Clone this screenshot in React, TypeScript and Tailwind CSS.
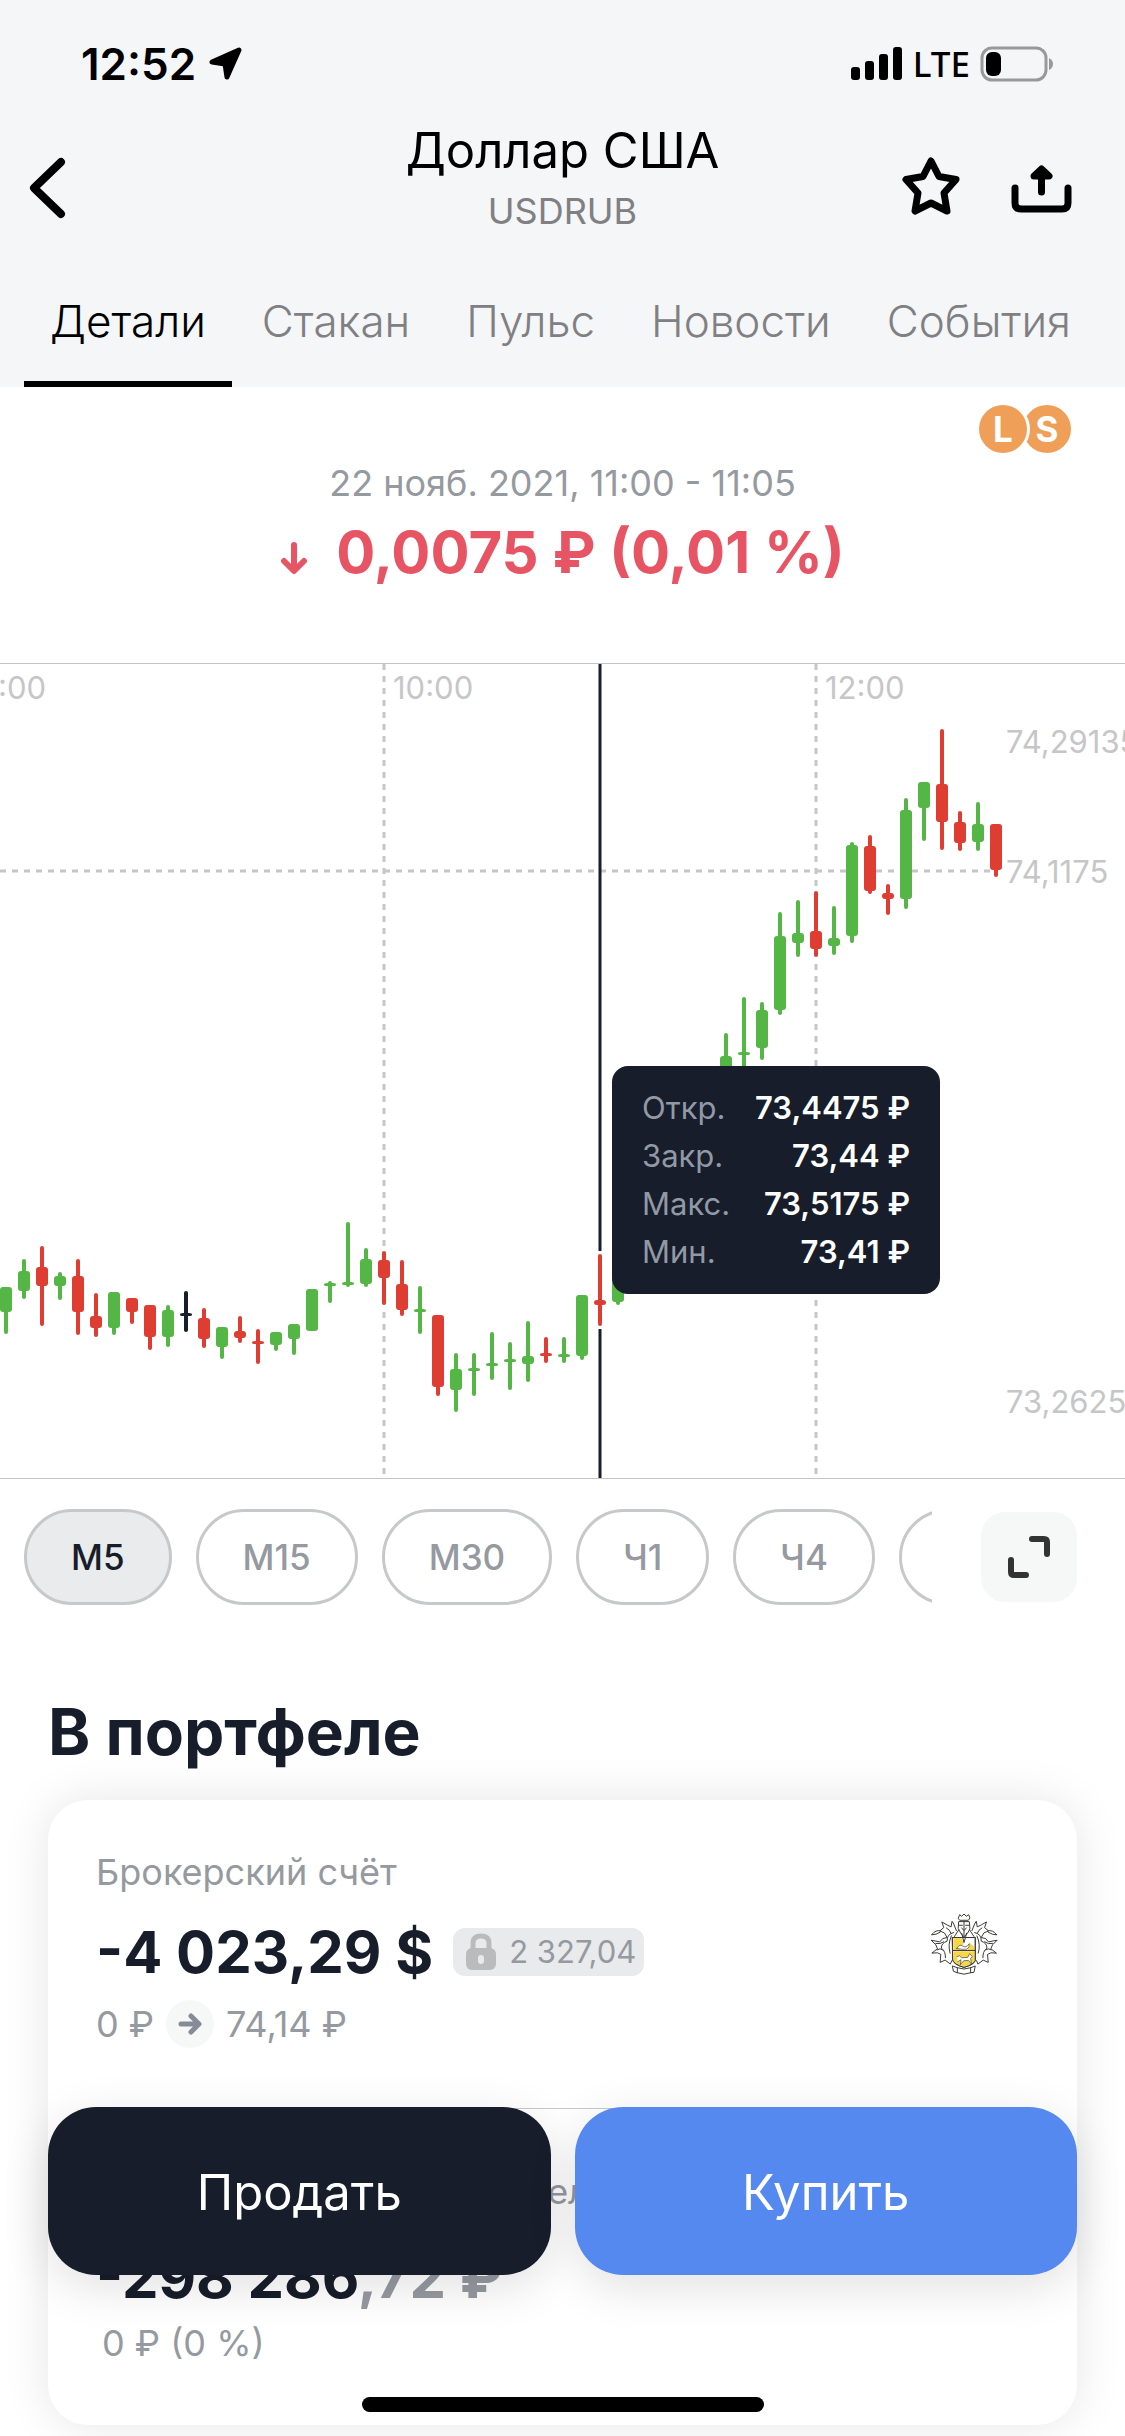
import { useState } from "react";
import clsx from "clsx";

const tabs = ["Детали", "Стакан", "Пульс", "Новости", "События"];
const intervals = ["М5", "М15", "М30", "Ч1", "Ч4", "Д"];

const ohlc = [
	{ label: "Откр.", value: "73,4475 ₽" },
	{ label: "Закр.", value: "73,44 ₽" },
	{ label: "Макс.", value: "73,5175 ₽" },
	{ label: "Мин.", value: "73,41 ₽" },
];

const GREEN = "#54b645";
const RED = "#df3c32";
const DARK = "#171d2a";

// slot, color, body top, body bottom, wick top, wick bottom
type Candle = [number, string, number, number, number, number];

const candles: Candle[] = [
	[0, GREEN, 623, 648, 623, 670],
	[1, GREEN, 607, 627, 595, 635],
	[2, RED, 603, 622, 582, 662],
	[3, GREEN, 612, 622, 608, 636],
	[4, RED, 612, 648, 595, 671],
	[5, RED, 652, 664, 629, 673],
	[6, GREEN, 628, 664, 628, 671],
	[7, RED, 634, 648, 634, 660],
	[8, RED, 641, 673, 641, 686],
	[9, GREEN, 646, 673, 641, 683],
	[10, DARK, 649, 652, 627, 668],
	[11, RED, 654, 675, 644, 684],
	[12, GREEN, 663, 683, 663, 695],
	[13, RED, 667, 674, 652, 679],
	[14, RED, 677, 680, 665, 700],
	[15, GREEN, 668, 681, 668, 687],
	[16, GREEN, 660, 675, 660, 691],
	[17, GREEN, 625, 667, 625, 667],
	[18, GREEN, 619, 622, 617, 639],
	[19, GREEN, 618, 621, 558, 623],
	[20, GREEN, 595, 620, 584, 623],
	[21, RED, 596, 614, 587, 641],
	[22, RED, 620, 646, 596, 652],
	[23, GREEN, 645, 648, 622, 670],
	[24, RED, 651, 723, 651, 732],
	[25, GREEN, 705, 726, 689, 748],
	[26, GREEN, 704, 707, 689, 732],
	[27, GREEN, 699, 702, 668, 716],
	[28, GREEN, 695, 698, 678, 726],
	[29, GREEN, 692, 700, 657, 718],
	[30, RED, 689, 692, 673, 699],
	[31, GREEN, 690, 693, 673, 699],
	[32, GREEN, 631, 692, 631, 696],
	[33, RED, 636, 641, 590, 662],
	[34, GREEN, 590, 638, 590, 641],
	[40, GREEN, 392, 420, 369, 420],
	[41, GREEN, 388, 391, 333, 410],
	[42, GREEN, 346, 384, 338, 396],
	[43, GREEN, 272, 346, 248, 351],
	[44, GREEN, 269, 279, 236, 293],
	[45, RED, 267, 285, 227, 293],
	[46, GREEN, 274, 282, 242, 291],
	[47, GREEN, 181, 272, 178, 279],
	[48, RED, 182, 227, 171, 230],
	[49, RED, 229, 235, 220, 251],
	[50, GREEN, 146, 235, 134, 245],
	[51, GREEN, 118, 144, 118, 177],
	[52, RED, 120, 158, 65, 186],
	[53, RED, 158, 179, 147, 187],
	[54, GREEN, 160, 178, 138, 187],
	[55, RED, 160, 206, 160, 213],
];

const StatusBar = () => (
	<div className="flex h-[120px] items-center justify-between pt-2 pr-[71px] pl-[81px]">
		<div className="flex items-center gap-3">
			<span className="text-[44px] leading-[48px] font-semibold">12:52</span>
			<svg width="36" height="36" viewBox="0 0 36 36" aria-hidden="true">
				<path d="M4 16 L31 4 L19 31 L17 18 Z" fill="#000" stroke="#000" strokeWidth="5" strokeLinejoin="round" />
			</svg>
		</div>
		<div className="flex items-center gap-[10px]">
			<svg width="52" height="34" viewBox="0 0 52 34" aria-hidden="true">
				<rect x="0" y="20" width="9" height="13" rx="3" />
				<rect x="14" y="14" width="9" height="19" rx="3" />
				<rect x="28" y="7" width="9" height="26" rx="3" />
				<rect x="42" y="0" width="9" height="33" rx="3" />
			</svg>
			<span className="font-['Noto_Sans',sans-serif] text-[35px] leading-[48px] font-medium">LTE</span>
			<svg width="74" height="36" viewBox="0 0 74 36" aria-hidden="true">
				<rect x="2" y="2" width="64" height="32" rx="10" fill="none" stroke="#98999b" strokeWidth="3" />
				<rect x="6" y="6" width="15" height="24" rx="6" />
				<path d="M69 12 q4 2 4 6 q0 4 -4 6 z" fill="#98999b" />
			</svg>
		</div>
	</div>
);

const Crest = () => (
	<svg className="mr-[30px] mb-2" width="70" height="63" viewBox="85 97 208 190" role="img" aria-label="Тинькофф" fill="none" stroke="#3b3a36" strokeWidth="3" strokeLinejoin="round" strokeLinecap="round">
		<path d="M155 171 H223 V240 Q220 252 189 261 Q158 252 155 240 Z" fill="#fff" />
		<path d="M157 173 H180 L189 186 L176 209 H157 Z" fill="#f6d748" stroke="none" />
		<path d="M157 212 H221 V240 Q218 250 189 259 Q160 250 157 240 Z" fill="#f6d748" stroke="none" />
		<path d="M205 186 L222 202 V209 H200 Z" fill="#f6d748" stroke="none" />
		<path d="M155 171 H223 V240 Q220 252 189 261 Q158 252 155 240 Z M155 210 H223" />
		<path d="M167 204 Q176 190 184 196 Q196 204 204 190 Q208 200 198 206 Q184 208 167 204" fill="#fff" strokeWidth="2" />
		<path d="M168 228 Q176 222 182 232 L200 231 L206 220 L214 228 L209 234 L212 252 L203 240 L188 241 L178 253 L180 238 L170 244" fill="#fff" strokeWidth="2" />
		<path d="M172 112 L176 102 L182 107 L189 100 L196 107 L203 102 L207 112 L202 119 H177 Z" />
		<path d="M174 123 H205 L207 145 Q202 158 189 169 Q177 158 172 145 Z M174 134 H184 M194 134 H205 M189 124 V166 M182 142 L189 150 L196 142 M173 148 L160 168 M206 148 L219 168 M182 158 L189 186 L197 158" />
		<path d="M166 150 L158 130 L153 122 L150 139 L138 133 L122 124 L128 141 L116 151 L130 157 L138 171 L125 174 L116 184 L90 179 L104 193 L109 205 L92 218 L109 217 L119 222 L117 246 L132 239 L148 251 L152 241" />
		<path d="M158 156 Q137 160 138 182 Q120 188 121 203 Q134 213 133 232 M151 166 Q139 192 147 218 M136 142 Q147 148 150 158 M104 189 Q117 192 128 184 M108 208 Q118 201 124 208" />
		<path d="M213 150 L221 130 L226 122 L229 139 L241 133 L257 124 L251 141 L263 151 L249 157 L241 171 L254 174 L263 184 L289 179 L275 193 L270 205 L287 218 L270 217 L260 222 L262 246 L247 239 L231 251 L227 241" />
		<path d="M221 156 Q242 160 241 182 Q259 188 258 203 Q245 213 246 232 M228 166 Q240 192 232 218 M243 142 Q232 148 229 158 M275 189 Q262 192 251 184 M271 208 Q261 201 255 208" />
		<path d="M119 151 Q104 146 91 163 Q105 163 117 155 M260 151 Q275 146 288 163 Q274 163 262 155" />
		<path d="M155 257 L169 262 Q189 270 209 262 L223 257 L219 276 L210 277 Q189 286 168 277 L158 273 Z M169 262 V277 M209 262 V277" fill="#fff" />
	</svg>
);

const Chart = () => (
	<section className="relative border-y border-[#c4c4c6]" aria-label="График USDRUB">
		<svg className="block w-full" viewBox="0 0 1125 814">
			<g stroke="#c6c6c8" strokeWidth="3" strokeDasharray="6 6">
				<path d="M384 0 V814" />
				<path d="M816 0 V814" />
				<path d="M0 207 H990" />
			</g>
			<path d="M600 0 V814" stroke={DARK} strokeWidth="3" />
			{candles.map(([slot, color, top, bottom, high, low]) => {
				const x = 6 + slot * 18;
				return (
					<g key={slot} fill={color}>
						<rect x={x - 3} y={high - 3} width="6" height={low - high + 6} fill="#fff" />
						<rect x={x - 2} y={high} width="4" height={low - high} rx="2" />
						<rect x={x - 6} y={top} width="12" height={bottom - top} rx="3" />
					</g>
				);
			})}
			<g fill="#c6c6c8" fontSize="31">
				<text x="-2" y="35">:00</text>
				<text x="393" y="35">10:00</text>
				<text x="825" y="35">12:00</text>
				<text x="1006" y="89">74,29135</text>
				<text x="1006" y="219">74,1175</text>
				<text x="1006" y="749">73,2625</text>
			</g>
		</svg>
		<dl className="absolute top-[402px] left-[612px] w-[328px] rounded-[16px] bg-[#171d2a] px-[30px] py-[18px] text-[31px] leading-[48px]">
			{ohlc.map((row) => (
				<div key={row.label} className="flex justify-between">
					<dt className="text-[#9299a6]">{row.label}</dt>
					<dd className="font-semibold text-white">{row.value}</dd>
				</div>
			))}
		</dl>
	</section>
);

export default function App() {
	const [tab, setTab] = useState("Детали");
	const [interval, setInterval] = useState("М5");

	return (
		<div className="overflow-x-hidden bg-white pb-[11px] font-[Inter,sans-serif] text-black">
			<header className="bg-[#f5f6f8]">
				<StatusBar />
				<div className="grid h-[136px] grid-cols-[1fr_auto_1fr]">
					<button type="button" aria-label="Назад" className="ml-6 justify-self-start">
						<svg width="48" height="68" viewBox="0 0 48 68" fill="none" stroke="#000" strokeWidth="8" strokeLinecap="round" strokeLinejoin="round">
							<path d="M37 8 L10 34 L37 60" />
						</svg>
					</button>
					<div className="pt-px text-center">
						<h1 className="text-[49px] leading-[60px]">Доллар США</h1>
						<p className="text-[36px] leading-[60px] text-[#808083]">USDRUB</p>
					</div>
					<div className="mr-[52px] mb-1 flex items-center gap-12 justify-self-end">
						<button type="button" aria-label="В избранное">
							<svg width="60" height="60" viewBox="0 0 60 60" fill="none" stroke="#000" strokeWidth="7" strokeLinejoin="round">
								<path d="M30 5 L38 20.500 L55 23.500 L43 37 L46 55 L30 47 L14 55 L17 37 L5 23.500 L22 20.500 Z" />
							</svg>
						</button>
						<button type="button" aria-label="Поделиться">
							<svg width="64" height="60" viewBox="0 0 64 60" fill="none" stroke="#000" strokeWidth="7" strokeLinecap="round" strokeLinejoin="round">
								<path d="M6 32 V47 Q6 53 12 53 H53 Q59 53 59 47 V32" />
								<path d="M32.500 36 V16" />
								<path d="M25 20 L32.500 13 L40 20 Z" fill="#000" />
							</svg>
						</button>
					</div>
				</div>
				<nav className="flex h-[131px] justify-between pr-7 pl-6">
					{tabs.map((name) => (
						<button
							key={name}
							type="button"
							onClick={() => setTab(name)}
							className={clsx(
								"border-b-6 px-[26px] pt-[5px] text-[44px] font-light",
								name === tab ? "border-black text-black" : "border-transparent text-[#808083]",
							)}>
							{name}
						</button>
					))}
				</nav>
			</header>

			<main>
				<section className="pt-[18px] pb-[66px]">
					<div className="flex justify-end pr-[54px] text-[35px] leading-[48px] font-bold text-white">
						<span className="z-10 -mr-1 size-12 rounded-full bg-[#f09f59] text-center ring-3 ring-white">L</span>
						<span className="size-12 rounded-full bg-[#f09f59] text-center">S</span>
					</div>
					<p className="mt-[6px] text-center text-[36px] leading-[48px] text-[#9599a0]">22 нояб. 2021, 11:00 - 11:05</p>
					<p className="flex items-center justify-center gap-7 text-[58px] leading-[90px] font-bold text-[#e75565]">
						<svg className="mt-3" width="28" height="34" viewBox="0 0 28 34" fill="none" stroke="currentColor" strokeWidth="6" strokeLinecap="round" strokeLinejoin="round" aria-hidden="true">
							<path d="M14 4 V29 M4 20 L14 30 L24 20" />
						</svg>
						0,0075 ₽ (0,01 %)
					</p>
				</section>

				<Chart />

				<div className="flex items-center justify-between pt-[30px] pr-12 pl-6">
					<div className="mr-[49px] flex flex-1 gap-6 overflow-hidden">
						{intervals.map((name) => (
							<button
								key={name}
								type="button"
								onClick={() => setInterval(name)}
								className={clsx(
									"h-24 shrink-0 rounded-full border-3 border-[#c6c8c9] px-11 text-[35px] font-medium",
									name === interval ? "bg-[#e9ebed] text-[#171d2a]" : "text-[#9599a0]",
								)}>
								{name}
							</button>
						))}
					</div>
					<button type="button" aria-label="На весь экран" className="flex h-[90px] w-24 items-center justify-center rounded-[24px] bg-[#f6f7f7]">
						<svg width="44" height="44" viewBox="0 0 44 44" fill="none" stroke="#333" strokeWidth="6" strokeLinecap="round" strokeLinejoin="round">
							<path d="M25 4 H37 Q40 4 40 7 V19 M4 25 V37 Q4 40 7 40 H19" />
						</svg>
					</button>
				</div>

				<h2 className="mt-[87px] px-12 text-[64px] leading-[80px] font-bold text-[#171d2a]">В портфеле</h2>

				<section className="mx-12 mt-7 rounded-[40px] bg-white px-12 pt-12 pb-[58px] text-[36px] leading-[48px] text-[#9599a0] shadow-[0_0_48px_rgba(0,0,0,0.10)]">
					<div className="flex items-center justify-between">
						<div>
							<h3>Брокерский счёт</h3>
							<div className="mt-5 flex items-center gap-5">
								<span className="text-[58px] leading-[72px] font-bold text-[#171d2a]">-4 023,29 $</span>
								<span className="flex h-12 items-center gap-3 rounded-[12px] bg-[#e8eaec] px-2 pl-3 text-[31px]">
									<svg width="32" height="38" viewBox="0 0 32 38" aria-hidden="true">
										<path d="M8 17 V10 Q8 3 16 3 Q24 3 24 10 V17" fill="none" stroke="#b9bbbd" strokeWidth="5" />
										<rect x="1" y="15" width="30" height="22" rx="6" fill="#b9bbbd" />
										<rect x="13" y="22" width="6" height="9" rx="3" fill="#e8eaec" />
									</svg>
									2 327,04
								</span>
							</div>
							<div className="mt-3 flex items-center gap-3">
								<span>0 ₽</span>
								<span className="flex size-12 items-center justify-center rounded-full bg-[#f6f7f7]">
									<svg width="24" height="22" viewBox="0 0 24 22" fill="none" stroke="#868c97" strokeWidth="5" strokeLinecap="round" strokeLinejoin="round" aria-hidden="true">
										<path d="M3 11 H20 M13 3 L21 11 L13 19" />
									</svg>
								</span>
								<span>74,14 ₽</span>
							</div>
						</div>
						<Crest />
					</div>
					<hr className="mt-15 border-[#c6c8c9]" />
					<h3 className="mt-[58px] text-[35px]">Текущая стоимость портфеля</h3>
					<p className="mt-[26px] text-[58px] leading-[72px] font-bold text-[#171d2a]">
						-298 286<span className="text-[#9599a0]">,72 ₽</span>
					</p>
					<p className="mt-[6px] ml-[6px]">0 ₽ (0 %)</p>
				</section>
			</main>

			<footer className="fixed inset-x-0 bottom-0 z-20 px-12 pb-6">
				<div className="grid grid-cols-2 gap-6 text-[49px] text-white">
					<button type="button" className="h-[168px] rounded-[48px] bg-[#171d2a] pt-1 shadow-[0_12px_48px_rgba(0,0,0,0.12)]">Продать</button>
					<button type="button" className="h-[168px] rounded-[48px] bg-[#5589f0] pt-1 shadow-[0_12px_48px_rgba(0,0,0,0.12)]">Купить</button>
				</div>
				<div className="mx-auto mt-[122px] h-[15px] w-[402px] rounded-full bg-black" />
			</footer>
		</div>
	);
}
